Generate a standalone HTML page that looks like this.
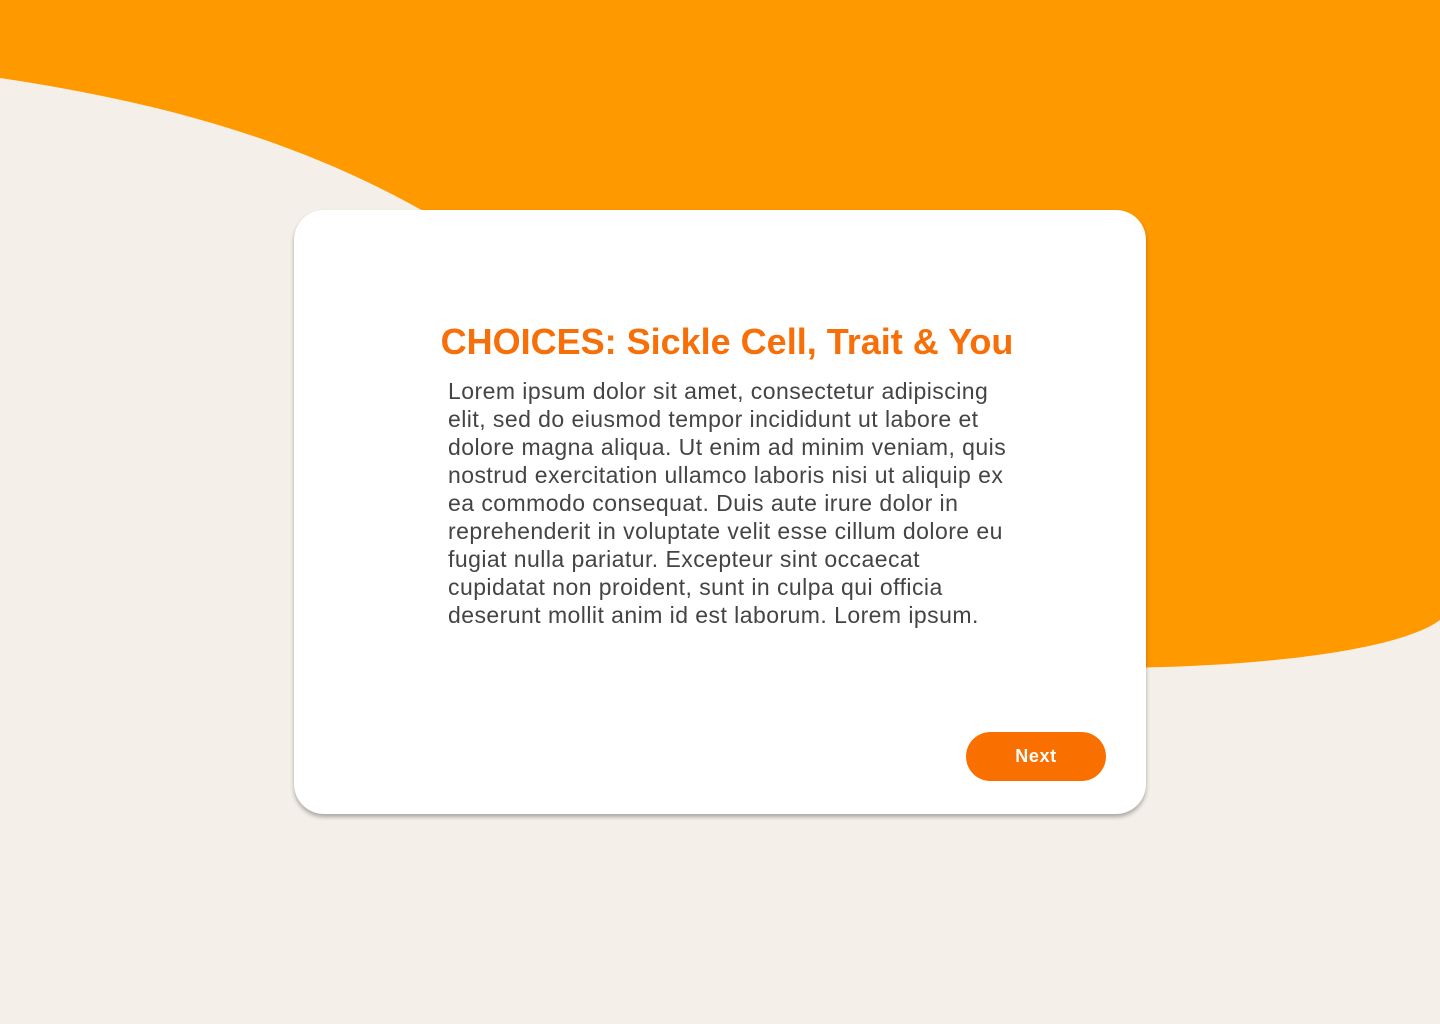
<!DOCTYPE html>
<html><head><meta charset="utf-8"><style>
html,body{margin:0;padding:0;}
body{width:1440px;height:1024px;background:#f4f0e9;position:relative;overflow:hidden;font-family:"Liberation Sans",Arial,sans-serif;}
svg.bg{position:absolute;left:0;top:0;}
.card{position:absolute;left:294px;top:210px;width:852px;height:604px;background:#fff;border-radius:30px;box-shadow:0 3px 4px rgba(0,0,0,0.3);}
h1{position:absolute;top:320px;margin:0;text-align:center;font-size:36px;font-weight:bold;color:#f76f08;line-height:44px;}
.txt{position:absolute;left:448px;top:377px;font-size:23px;line-height:28px;letter-spacing:0.45px;color:#444;white-space:nowrap;}
.btn{position:absolute;left:966px;top:732px;width:140px;height:49px;border-radius:25px;background:#f97000;color:#fff;font-weight:bold;font-size:18px;letter-spacing:0.6px;text-align:center;line-height:49px;}
</style></head><body>
<svg class="bg" width="1440" height="1024"><path d="M0,0 H1440 V620 C1400,650 1260,668 1100,668 C800,668 580,420 430,215 C300,140 160,102 0,78 Z" fill="#ff9900"/></svg>
<div class="card"></div>
<h1 style="left:294px;width:866px;">CHOICES: Sickle Cell, Trait &amp; You</h1>
<div class="txt">Lorem ipsum dolor sit amet, consectetur adipiscing<br>elit, sed do eiusmod tempor incididunt ut labore et<br>dolore magna aliqua. Ut enim ad minim veniam, quis<br>nostrud exercitation ullamco laboris nisi ut aliquip ex<br>ea commodo consequat. Duis aute irure dolor in<br>reprehenderit in voluptate velit esse cillum dolore eu<br>fugiat nulla pariatur. Excepteur sint occaecat<br>cupidatat non proident, sunt in culpa qui officia<br>deserunt mollit anim id est laborum. Lorem ipsum.</div>
<div class="btn">Next</div>
</body></html>
